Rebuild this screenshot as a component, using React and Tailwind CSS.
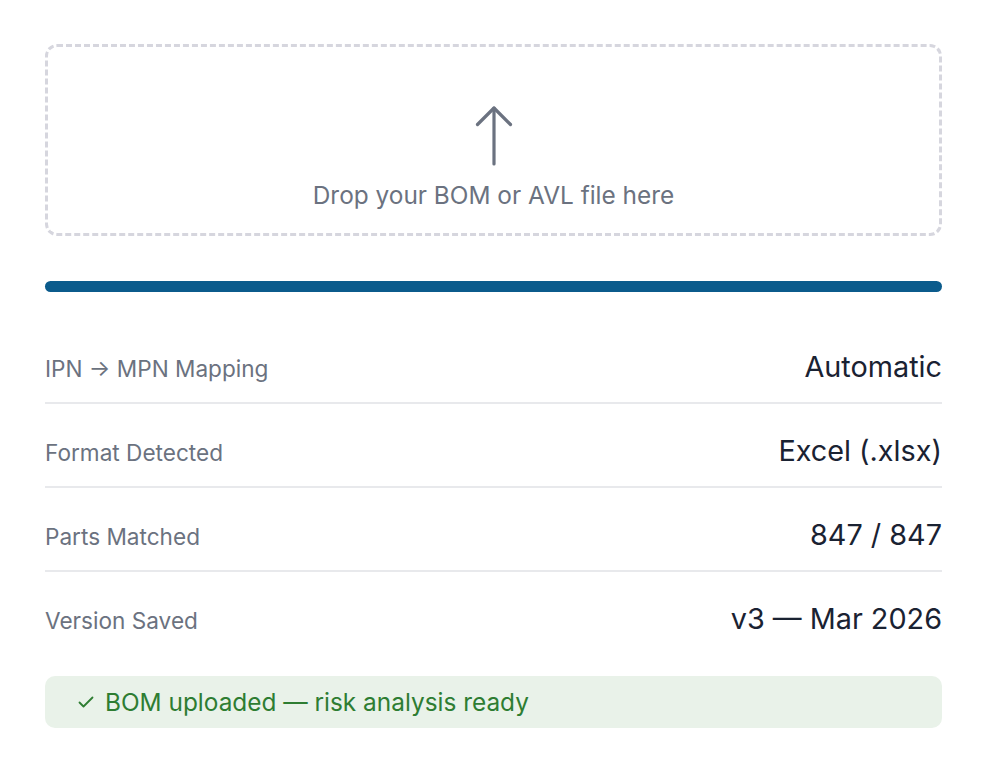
export default function App() {
  const rows = [
    ["IPN → MPN Mapping", "Automatic"],
    ["Format Detected", "Excel (.xlsx)"],
    ["Parts Matched", "847 / 847"],
    ["Version Saved", "v3 — Mar 2026"],
  ];
  return (
    <div className="w-[988px] h-[760px] bg-white pl-[45px] pr-[46px] pt-[44px]" style={{ fontFamily: "Inter, 'Noto Sans', sans-serif" }}>
      <div className="h-[192px] rounded-[12px] border-[3px] border-dashed border-[#d6d6de] flex flex-col items-center pt-[58px]">
        <svg width="40" height="62" viewBox="0 0 40 62" fill="none" stroke="#6b7280" strokeWidth="3.2" strokeLinecap="round" strokeLinejoin="round">
          <path d="M20 3 V59" />
          <path d="M3.5 19.5 L20 3 L36.5 19.5" />
        </svg>
        <div className="mt-[13px] text-[24.4px] leading-[30px] text-[#6b7280]">Drop your BOM or AVL file here</div>
      </div>
      <div className="mt-[45px] h-[11px] rounded-full bg-[#0b5b8c]" />
      <div className="mt-[28px]">
        {rows.map(([l, v], i) => (
          <div key={l} className={`flex justify-between items-baseline pt-[30px] pb-[18px] ${i < 3 ? "border-b-2 border-[#e8e9ec]" : ""}`}>
            <span className="text-[22.6px] leading-[28px] text-[#6b7280]">{l}</span>
            <span className="text-[28.8px] leading-[34px] text-[#1a2232]">{v}</span>
          </div>
        ))}
      </div>
      <div className="mt-[22px] h-[52px] rounded-[10px] bg-[#e9f2e9] flex items-center pl-[33px] text-[24.4px] text-[#2e7d32]">
        <svg width="16" height="12" viewBox="0 0 16 12" fill="none" stroke="#2e7d32" strokeWidth="1.8" strokeLinecap="round" strokeLinejoin="round" className="mr-[11px]">
          <path d="M1.5 6.5 L5.5 10.5 L14.5 1.5" />
        </svg>
        <span>BOM uploaded — risk analysis ready</span>
      </div>
    </div>
  );
}
